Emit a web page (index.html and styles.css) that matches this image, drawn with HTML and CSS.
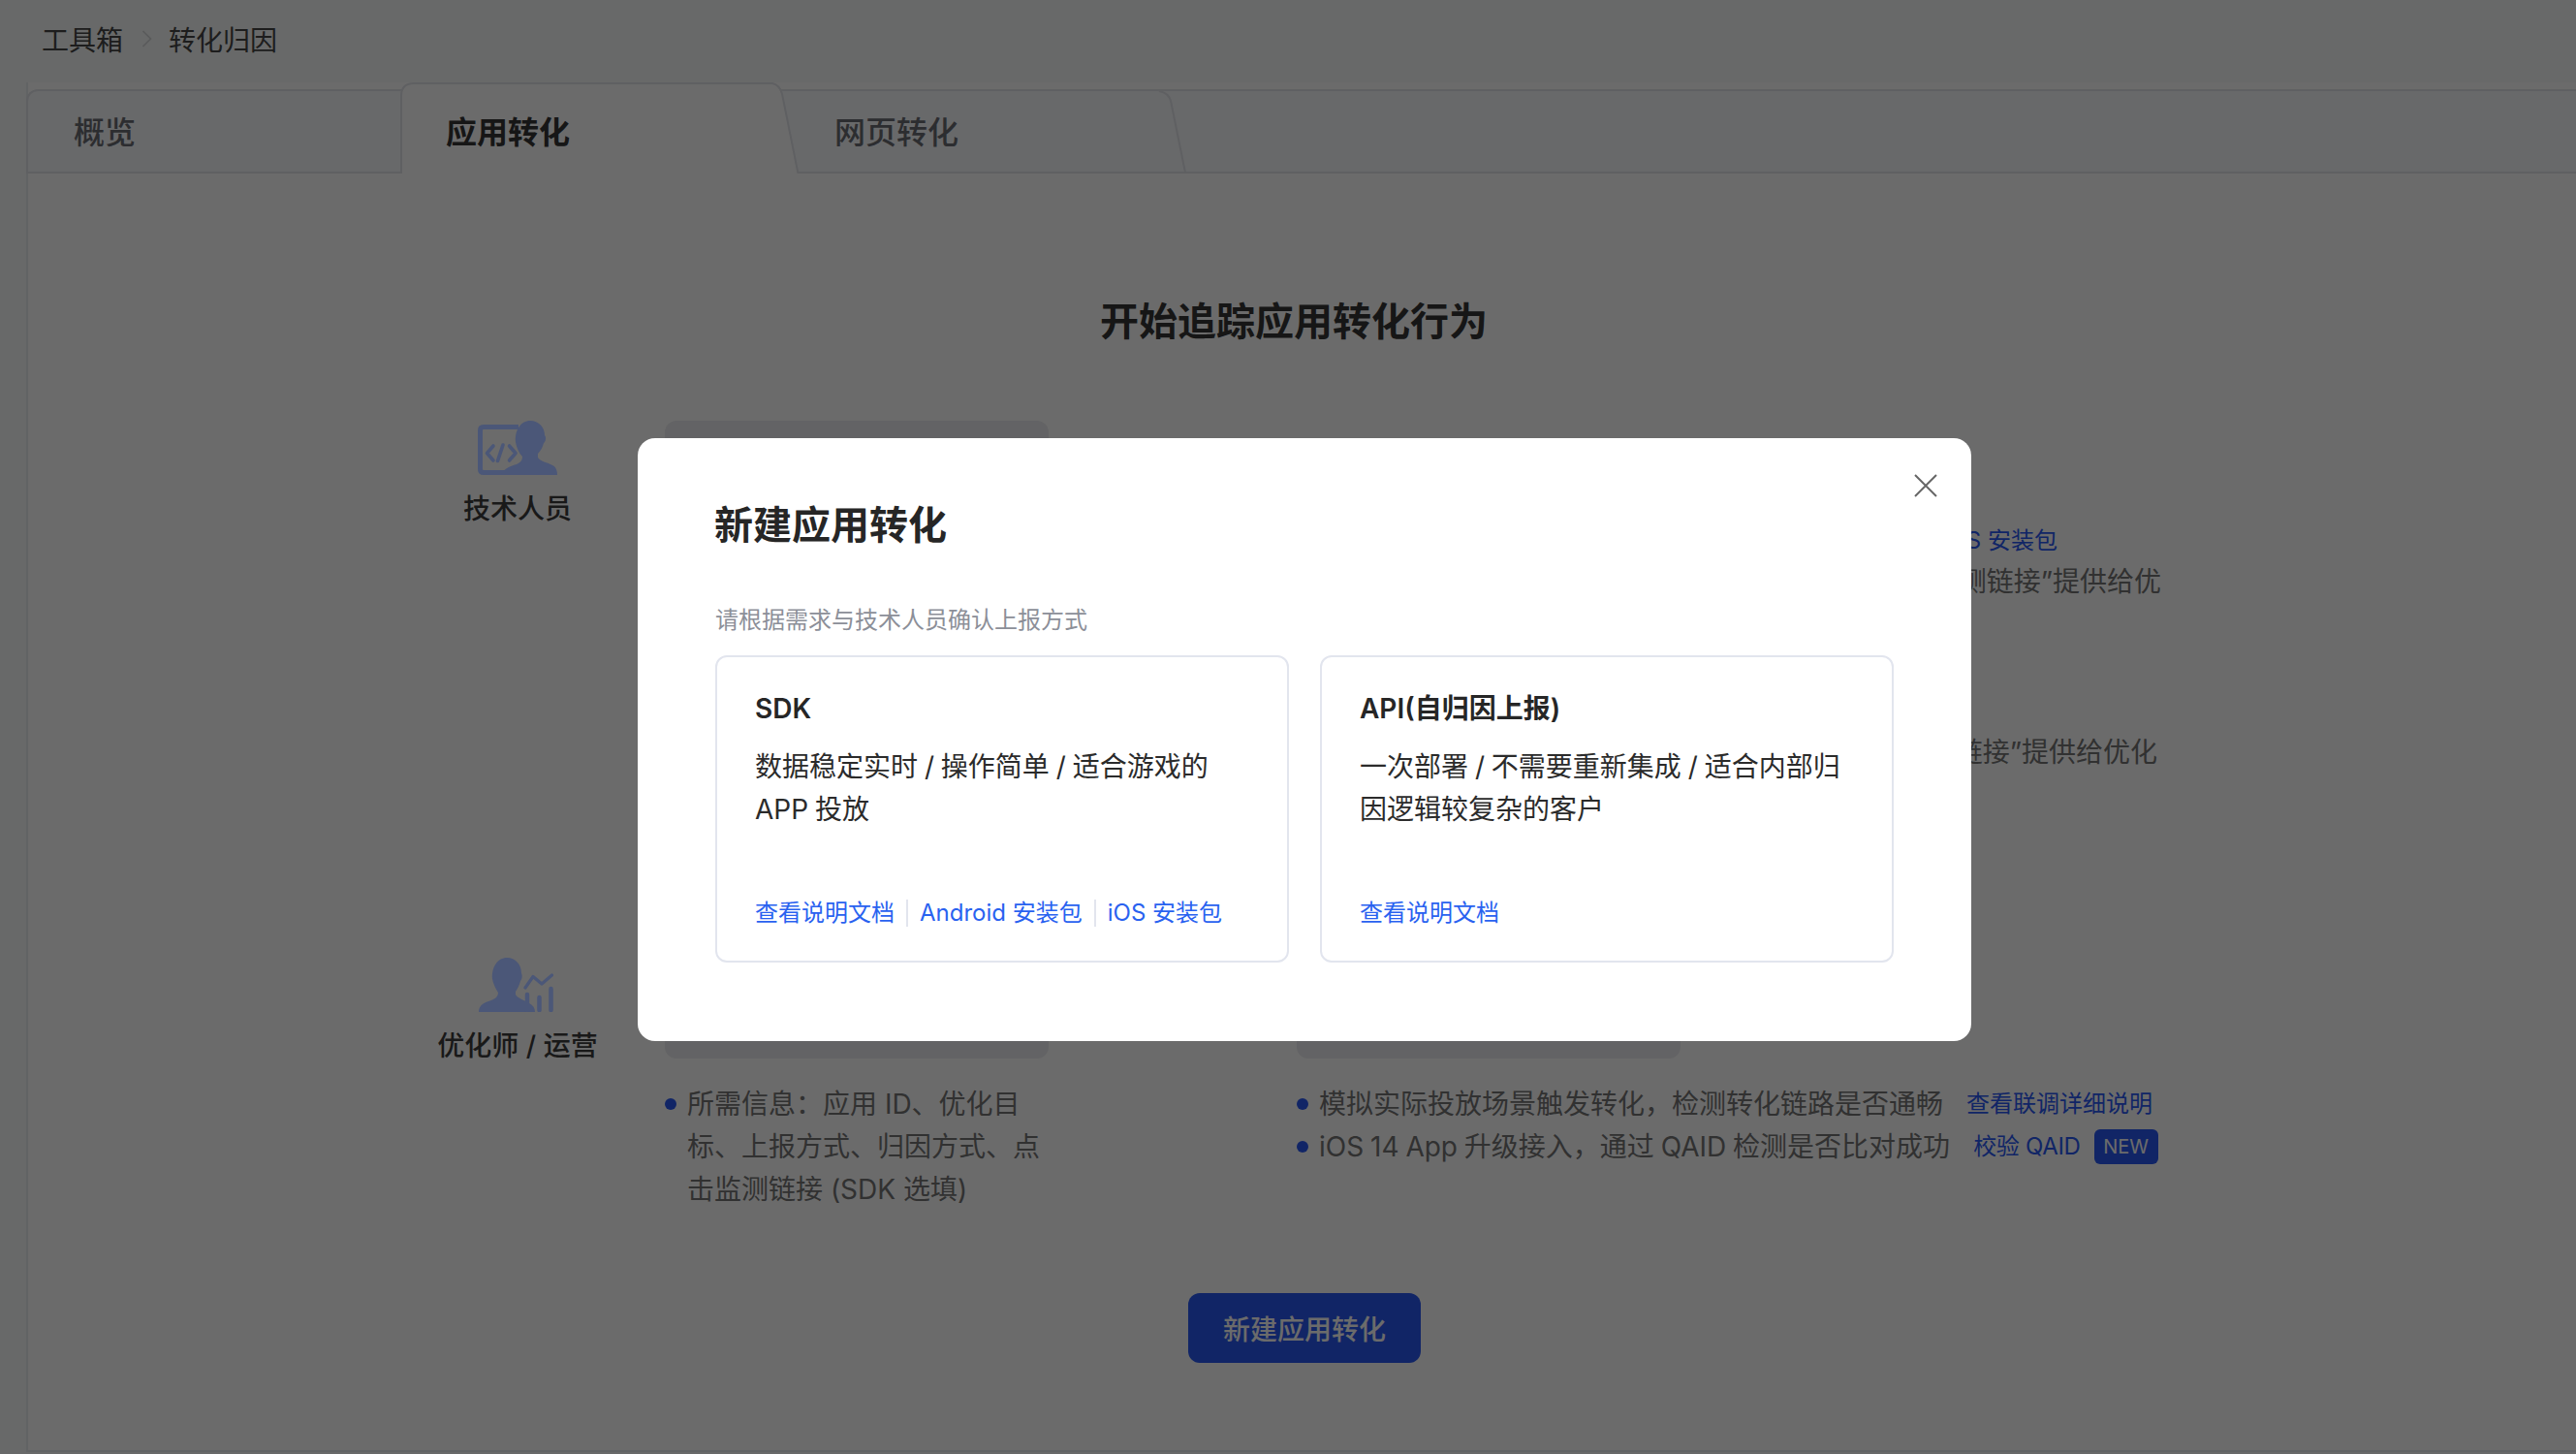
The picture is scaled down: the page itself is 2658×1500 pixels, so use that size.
FILE: index.html
```html
<!DOCTYPE html>
<html lang="zh-CN">
<head>
<meta charset="utf-8">
<title>转化归因</title>
<link rel="stylesheet" href="styles.css">
</head>
<body>
<div class="page">
  <nav class="crumbs">
    <span>工具箱</span>
    <svg class="crumb-sep" width="11" height="18" viewBox="0 0 11 18"><path d="M1.5 1 L9.5 9 L1.5 17" fill="none" stroke="#d4d6d8" stroke-width="1.6"/></svg>
    <span>转化归因</span>
  </nav>
  <main class="panel">
    <div class="tabs">
      <div class="tab tab-first">概览</div>
      <div class="tab tab-active">
        <svg class="tab-shape" width="411" height="94" viewBox="0 0 411 94"><path d="M1 94 V14 Q1 1 14 1 H384 Q392 3 394 12 L410.500 94" fill="#fff" stroke="#e2e4ea" stroke-width="2"/></svg>
        <span class="tab-label">应用转化</span>
      </div>
      <div class="tab tab-third">
        <svg class="tab-shape" width="400" height="94" viewBox="0 0 400 94"><path d="M372 9 Q382 11 384 19 L399 93" fill="none" stroke="#e2e4ea" stroke-width="2"/></svg>
        <span class="tab-label">网页转化</span>
      </div>
    </div>
    <h1 class="headline">开始追踪应用转化行为</h1>
    <section class="flow flow-dev">
      <div class="role">
        <svg class="role-icon" width="82" height="56" viewBox="0 0 82 56">
          <path d="M42 6.5 H6 Q2.500 6.500 2.500 10 V50 Q2.500 53.500 6 53.500 H30" fill="none" stroke="#4b5778" stroke-width="5"/>
          <path d="M16 26 L9.500 33.500 L16 41 M26 25 L20.500 41.500 M32.500 26 L39 33.500 L32.500 41" fill="none" stroke="#4b5778" stroke-width="3.600" stroke-linecap="round" stroke-linejoin="round"/>
          <path d="M54 0 C63 0 69 7 69 15 C71 17 70 22 68 23 C67 27 65 31 62 34 V38 C64 42 72 43 77 46 C81 48 82 52 82 56 H24 C26 50 33 47 40 45 C44 43 46 41 46 37 C42 33 40 27 39 22 C38 9 45 0 54 0 Z" fill="#4b5778"/>
        </svg>
        <div class="role-name">技术人员</div>
      </div>
      <div class="step">
        <div class="step-head"></div>
      </div>
      <div class="dev-notes">
        <div class="line-link"><a class="link">查看说明文档</a> <a class="link">Android 安装包</a> <a class="link">iOS 安装包</a></div>
        <div class="line-text">集成后将应用信息与&quot;点击监测链接”提供给优</div>
        <div class="line-text line-text-low">完成后将&quot;点击监测链接”提供给优化</div>
      </div>
    </section>
    <section class="flow">
      <div class="role">
        <svg class="role-icon role-icon-ops" width="77" height="56" viewBox="0 0 77 56">
          <path d="M29 0 C38 0 44 7 44 16 C45 18 45 22 43 24 C42 28 40 32 38 35 V38 C40 42 48 44 52 47 C56 49 58 52 58 56 H0 C0 50 4 47 10 45 C16 43 20 41 20 36 C17 31 15 27 14 22 C13 9 20 0 29 0 Z" fill="#4b5778"/>
          <path d="M48 31 L56 19.500 L65 27 L75.500 18" fill="none" stroke="#4b5778" stroke-width="3.200" stroke-linejoin="round" stroke-linecap="round"/>
          <path d="M50 38 V54 M62.500 41 V54 M74.500 32 V54" fill="none" stroke="#4b5778" stroke-width="4.500" stroke-linecap="round"/>
        </svg>
        <div class="role-name">优化师 / 运营</div>
      </div>
      <div class="step">
        <div class="step-head"></div>
        <ul class="notes">
          <li>所需信息&#xFF1A;应用 ID&#x3001;优化目标&#x3001;上报方式&#x3001;归因方式&#x3001;点击监测链接 (SDK 选填)</li>
        </ul>
      </div>
      <div class="step step-wide">
        <div class="step-head"></div>
        <ul class="notes">
          <li class="note-row"><span>模拟实际投放场景触发转化&#xFF0C;检测转化链路是否通畅</span><a class="link link-first">查看联调详细说明</a></li>
          <li class="note-row"><span class="note-tight">iOS 14 App 升级接入&#xFF0C;通过 QAID 检测是否比对成功</span><a class="link link-after">校验 QAID</a><span class="badge">NEW</span></li>
        </ul>
      </div>
    </section>
    <div class="actions"><button class="primary">新建应用转化</button></div>
  </main>
</div>
<div class="overlay">
  <div class="modal">
    <svg class="close" width="24" height="24" viewBox="0 0 24 24"><path d="M1 1 L23 23 M23 1 L1 23" fill="none" stroke="#666" stroke-width="2"/></svg>
    <h2 class="modal-title">新建应用转化</h2>
    <p class="modal-sub">请根据需求与技术人员确认上报方式</p>
    <div class="cards">
      <article class="card">
        <h3 class="card-title">SDK</h3>
        <p class="card-desc">数据稳定实时 / 操作简单 / 适合游戏的 APP 投放</p>
        <div class="card-links">
          <a class="card-link">查看说明文档</a>
          <i class="card-sep"></i>
          <a class="card-link">Android 安装包</a>
          <i class="card-sep"></i>
          <a class="card-link">iOS 安装包</a>
        </div>
      </article>
      <article class="card">
        <h3 class="card-title">API(自归因上报)</h3>
        <p class="card-desc">一次部署 / 不需要重新集成 / 适合内部归因逻辑较复杂的客户</p>
        <div class="card-links">
          <a class="card-link">查看说明文档</a>
        </div>
      </article>
    </div>
  </div>
</div>
</body>
</html>
```
FILE: styles.css
```css
* { box-sizing: border-box; }
html, body { margin: 0; height: 100%; overflow: hidden; }
body {
  background: #f7faf9;
  color: #3c3c3c;
  font-family: Inter, "Noto Sans CJK SC", sans-serif;
}
.page { height: 1500px; }

.crumbs {
  height: 85px;
  padding: 0 0 5px 43px;
  display: flex;
  align-items: center;
  font-size: 28px;
  color: #454545;
}
.crumb-sep { margin: 0 17px 0 19px; }

.panel {
  margin-left: 27px;
  height: 1413px;
  background: #fff;
  border-left: 2px solid #e8ebef;
  border-bottom: 2px solid #e8ebef;
}

.tabs {
  position: relative;
  height: 94px;
  margin-left: -2px;
  display: flex;
  font-size: 32px;
  line-height: 44px;
}
.tabs::before {
  content: "";
  position: absolute;
  left: 0; right: 0; top: 7px; bottom: 0;
  background: #f8f9fc;
  border: 2px solid #e2e4ea;
  border-width: 2px 0 2px 2px;
  border-radius: 12px 0 0 0;
}
.tab {
  position: relative;
  padding-top: 30px;
  color: #6a6c72;
  font-weight: 500;
}
.tab-first { width: 386px; padding-left: 49px; }
.tab-active { width: 411px; padding-left: 47px; color: #353535; font-weight: 600; }
.tab-third { width: 400px; padding-left: 37px; }
.tab-shape { position: absolute; left: 0; top: 0; }
.tab-label { position: relative; }

.headline {
  margin: 125px 0 74px;
  padding-right: 17px;
  text-align: center;
  font-size: 40px;
  line-height: 56px;
  font-weight: 600;
  color: #363636;
}

.flow {
  padding-left: 405px;
  display: grid;
  grid-template-columns: 252px 652px 892px;
}
.flow-dev { height: 554px; }

.role { width: 200px; text-align: center; }
.role-icon { display: block; margin: 0 auto 15px; position: relative; z-index: 2; }
.role-icon-ops { margin-left: 60px; }
.role-name { font-size: 28px; line-height: 40px; font-weight: 500; color: #3c3c3c; white-space: nowrap; }

.step { width: 396px; }
.step-wide { width: 892px; }
.step-head {
  width: 396px;
  height: 104px;
  border-radius: 12px;
  background: #ecedf0;
}
.notes {
  margin: 25px 0 0;
  padding: 0;
  list-style: none;
  font-size: 28px;
  line-height: 44px;
  color: #757575;
}
.notes li { position: relative; padding-left: 23px; }
.notes li::before {
  content: "";
  position: absolute;
  left: 0; top: 16px;
  width: 12px; height: 12px;
  border-radius: 50%;
  background: #2a59f3;
}
.note-row { display: flex; align-items: center; white-space: nowrap; }
.note-tight { word-spacing: -1px; }
.link { color: #2a59f3; font-size: 24px; }
.link-first { margin-left: 24px; }
.link-after { margin-left: 24px; letter-spacing: -0.3px; }
.badge {
  flex: none;
  margin-left: 14px;
  width: 66px;
  height: 36px;
  border-radius: 6px;
  background: #2a59f3;
  color: #fff;
  font-size: 20px;
  line-height: 36px;
  text-align: center;
}

.dev-notes { padding-top: 102px; text-align: right; white-space: nowrap; }
.line-link { height: 42px; line-height: 44px; padding-right: 107px; }
.line-text { height: 44px; line-height: 44px; font-size: 28px; color: #757575; }
.line-text-low { margin-top: 132px; padding-right: 4px; }

.actions { margin-top: 85px; padding-left: 5px; display: flex; justify-content: center; }
.primary {
  width: 240px;
  height: 72px;
  border: 0;
  border-radius: 12px;
  background: #2a59f3;
  color: #fff;
  font: 500 28px Inter, "Noto Sans CJK SC", sans-serif;
}

.overlay { position: fixed; inset: 0; z-index: 1; background: rgba(0, 0, 0, .58); }
.modal {
  position: absolute;
  left: 658px;
  top: 452px;
  width: 1376px;
  padding: 62px 80px 81px;
  background: #fff;
  border-radius: 18px;
}
.close { position: absolute; left: 1317px; top: 37px; }
.modal-title { margin: 0 0 0 -1px; font-size: 40px; line-height: 56px; font-weight: 600; color: #262626; }
.modal-sub { margin: 52px 0 18px; font-size: 24px; line-height: 36px; color: #8c8f98; }
.cards { display: flex; gap: 32px; }
.card {
  width: 592px;
  height: 317px;
  padding: 33px 38px 32px 39px;
  border: 2px solid #e2e5ee;
  border-radius: 12px;
  display: flex;
  flex-direction: column;
}
.card-title { margin: 0; font-size: 28px; line-height: 40px; font-weight: 600; color: #262626; }
.card-desc { margin: 18px 0 0; font-size: 28px; line-height: 44px; color: #2b2b2b; word-spacing: -1px; }
.card-links { margin-top: auto; height: 34px; display: flex; align-items: center; gap: 12px; font-size: 24px; line-height: 34px; }
.card-link { color: #2962f0; white-space: nowrap; }
.card-sep { width: 2px; height: 28px; background: #e2e5ee; }
```
